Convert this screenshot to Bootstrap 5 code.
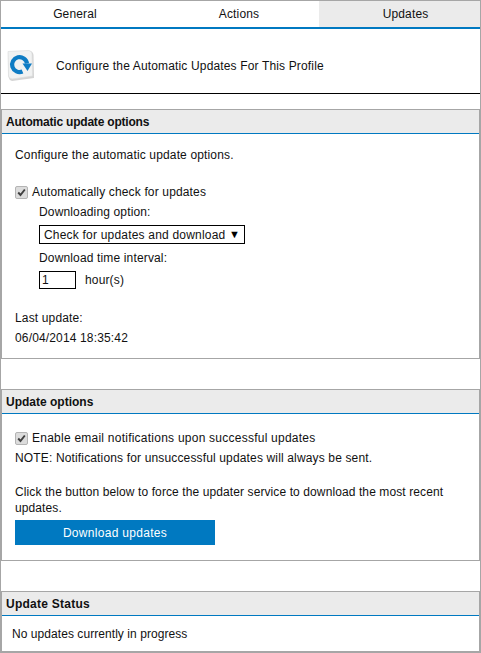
<!DOCTYPE html>
<html lang="en">
<head>
    <meta charset="UTF-8">
    <title>Updates</title>
    <meta name="viewport" content="width=device-width, initial-scale=1">
    <link href="https://cdn.jsdelivr.net/npm/bootstrap@5.3.2/dist/css/bootstrap.min.css" rel="stylesheet">
    <style>
        html, body { height: 653px; overflow: hidden; }
        body { font-family: "Liberation Sans", Arial, sans-serif; font-size: 12px; line-height: 20px; letter-spacing: .15px; color: #111; background: #fff; }
        .shell { height: 653px; border: 1px solid #a6a6a6; }
        .tabbar { border-bottom: 2px solid #0079c1; height: 28px; }
        .tabbar a { height: 26px; line-height: 26px; text-align: center; color: #111; text-decoration: none; }
        .tab-one { width: 158px; padding-right: 10px; }
        .tab-two { width: 160px; }
        .tab-three { flex-grow: 1; padding-left: 12px; background: #ebebeb; }
        .pagehead { height: 65px; border-bottom: 1px solid #000; padding: 9px 0 0 6px; margin-bottom: 15px; }
        .pagehead svg { margin-right: 21px; }
        .sect { border: 1px solid #a6a6a6; }
        .sect-head { height: 24px; line-height: 24px; padding-left: 4px; background: #ebebeb; border-bottom: 1px solid #0079c1; font-weight: 700; letter-spacing: 0; color: #111; }
        .head-tight { letter-spacing: -.2px; }
        .head-wide { letter-spacing: .25px; }
        .sect-one { height: 250px; margin-bottom: 30px; }
        .sect-two { height: 172px; margin-bottom: 30px; }
        .sect-three { height: 61px; }
        .sect-body { padding-left: 13px; padding-right: 13px; }
        .intro { padding-top: 11px; }
        .check-row { margin-top: 17px; }
        .check-row-two { margin-top: 14px; }
        .chk { appearance: none; width: 13px; height: 13px; margin: 0 4px 0 0; flex: none; border: 1px solid #b4b4b4; border-radius: 2px; background: #dcdcdc url("data:image/svg+xml,%3Csvg xmlns='http://www.w3.org/2000/svg' viewBox='0 0 11 11'%3E%3Cpath d='M2.200 5.500 L4.500 8 L8.800 2.500' fill='none' stroke='%23404040' stroke-width='1.900'/%3E%3C/svg%3E") center / 11px 11px no-repeat; }
        .indent { padding-left: 24px; }
        .pick-wrap { width: 206px; margin-top: 3px; }
        .pick-wrap::after { content: "\25BC"; position: absolute; right: 5px; top: 0; font-size: 11px; line-height: 18px; color: #000; pointer-events: none; }
        .pick { width: 206px; height: 19px; padding: 1px 4px 0; font-size: 12px; line-height: 17px; letter-spacing: .2px; color: #111; border: 1px solid #000; border-radius: 0; background-image: none; }
        .interval { margin-top: 4px; }
        .hours-row { margin-top: 2px; }
        .hours { width: 37px; height: 18px; padding: 0 2px; font-size: 12px; color: #111; border: 1px solid #000; border-radius: 0; }
        .hours-unit { margin-left: 9px; }
        .last-update { margin-top: 18px; }
        .wide-text { letter-spacing: .24px; }
        .force-text { margin-top: 16px; line-height: 16px; letter-spacing: .1px; }
        .dl-btn { width: 200px; height: 25px; margin-top: 4px; padding: 1px 0 0; font-size: 12px; line-height: 24px; letter-spacing: .3px; color: #fff; background: #0079c1; border: 0; border-radius: 0; }
        .dl-btn:hover { background: #0079c1; color: #fff; }
        .status-text { padding-top: 8px; padding-left: 10px; letter-spacing: .06px; }
    </style>
</head>
<body>

    <div class="shell">
        <div class="tabbar d-flex">
            <a href="#" class="tab-one">General</a>
            <a href="#" class="tab-two">Actions</a>
            <a href="#" class="tab-three">Updates</a>
        </div>

        <div class="pagehead d-flex align-items-center">
            <svg width="28" height="32" viewBox="0 0 28 32">
                <path d="M1 2 L23 1 Q26 1.500 26.500 5 L27 28 L5 31 Q2 30 1.500 27 Z" fill="#d4d4d4"/>
                <path d="M1 1.500 L22 .5 Q25 1 25 4 L25.500 26 L5 29 Q2 28.500 1.500 26 Z" fill="#f1f2f2" stroke="#dcdede" stroke-width="0.700"/>
                <path d="M15.500 21.500 A7.500 7.500 0 1 1 20 13.500" fill="none" stroke="#0f7cc4" stroke-width="4.200"/>
                <path d="M15.500 13.500 L25 13.500 L20.500 21 Z" fill="#0f7cc4"/>
            </svg>
            <span>Configure the Automatic Updates For This Profile</span>
        </div>

        <!-- Automatic update options -->
        <div class="sect sect-one">
            <div class="sect-head head-tight">Automatic update options</div>
            <div class="sect-body">
                <div class="intro">Configure the automatic update options.</div>
                <div class="d-flex align-items-center check-row">
                    <input type="checkbox" class="chk" checked disabled>
                    <span>Automatically check for updates</span>
                </div>
                <div class="indent">
                    <div>Downloading option:</div>
                    <div class="pick-wrap position-relative">
                        <select class="form-select pick">
                            <option>Check for updates and download</option>
                        </select>
                    </div>
                    <div class="interval">Download time interval:</div>
                    <div class="d-flex align-items-center hours-row">
                        <input type="text" class="form-control hours" value="1">
                        <span class="hours-unit">hour(s)</span>
                    </div>
                </div>
                <div class="last-update">Last update:</div>
                <div>06/04/2014 18:35:42</div>
            </div>
        </div>

        <!-- Update options -->
        <div class="sect sect-two">
            <div class="sect-head">Update options</div>
            <div class="sect-body">
                <div class="d-flex align-items-center check-row-two">
                    <input type="checkbox" class="chk" checked disabled>
                    <span class="wide-text">Enable email notifications upon successful updates</span>
                </div>
                <div>NOTE: Notifications for unsuccessful updates will always be sent.</div>
                <div class="force-text">Click the button below to force the updater service to download the most recent updates.</div>
                <button type="button" class="btn dl-btn d-block">Download updates</button>
            </div>
        </div>

        <!-- Update Status -->
        <div class="sect sect-three">
            <div class="sect-head head-wide">Update Status</div>
            <div class="sect-body status-text">No updates currently in progress</div>
        </div>
    </div>

    <script src="https://cdn.jsdelivr.net/npm/bootstrap@5.3.2/dist/js/bootstrap.bundle.min.js"></script>
</body>
</html>
